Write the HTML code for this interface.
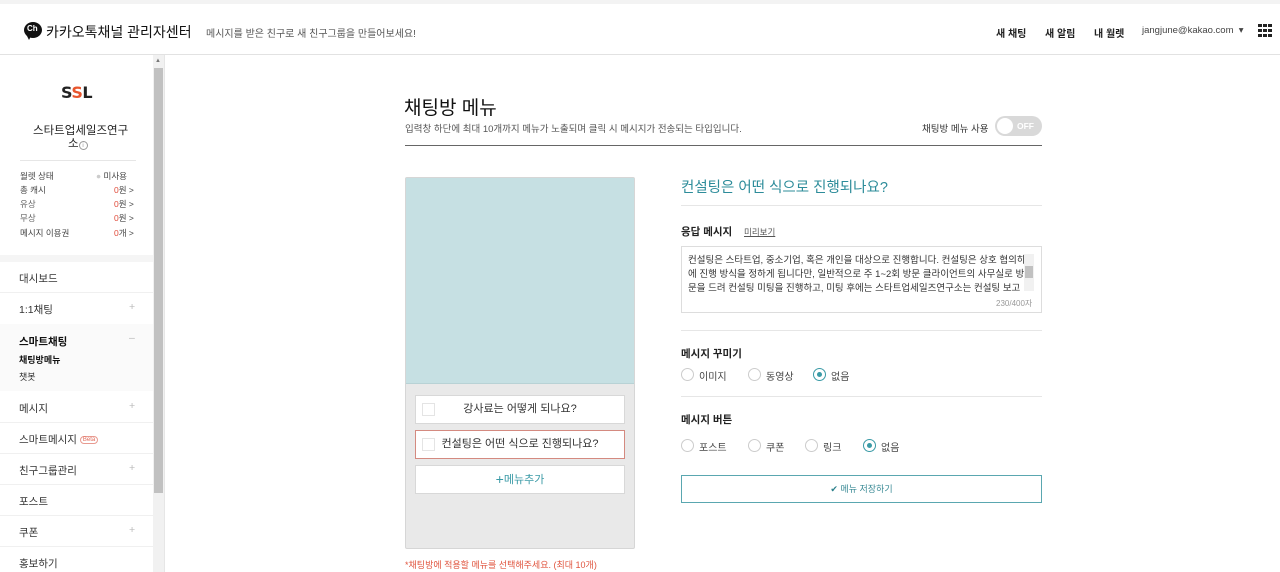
<!DOCTYPE html>
<html><head><meta charset="utf-8"><style>
*{box-sizing:border-box;margin:0;padding:0}
body{width:1280px;height:572px;overflow:hidden;background:#fff;font-family:"Liberation Sans","Noto Sans CJK KR",sans-serif;color:#222;position:relative}
.a{position:absolute}
.t{position:absolute;white-space:nowrap}
.radio{position:absolute;width:13px;height:13px;border:1px solid #ccc;border-radius:50%;background:#fff}
.radio.on{border-color:#3a9aa6}
.radio.on:after{content:"";position:absolute;left:3px;top:3px;width:5px;height:5px;border-radius:50%;background:#3a9aa6}
.lbl{font-size:10px;color:#444}
.mb{position:absolute;left:415px;width:210px;height:29px;background:#fff;border:1px solid #d8d8d8;font-size:11px;text-align:center;line-height:27px;color:#333}
.mb .cb{position:absolute;left:6px;top:7px;width:13px;height:13px;border:1px solid #e4e4e4}
</style></head><body>
<div class="a" style="left:0;top:0;width:1280px;height:4px;background:#f3f3f3"></div>
<div class="a" style="left:0;top:54px;width:1280px;height:1px;background:#e2e2e2"></div>
<!-- header -->
<div class="a" style="left:24px;top:22px;width:18px;height:16px;border-radius:50%;background:#111"></div>
<div class="a" style="left:26px;top:34px;width:0;height:0;border-left:3px solid transparent;border-right:3px solid transparent;border-top:6px solid #111"></div>
<div class="t" style="left:27px;top:24px;font-size:8px;color:#fff;font-weight:bold">Ch</div>
<div class="t" style="left:46px;top:22px;font-size:14px;color:#111">카카오톡채널 관리자센터</div>
<div class="t" style="left:206px;top:25px;font-size:10px;color:#555">메시지를 받은 친구로 새 친구그룹을 만들어보세요!</div>
<div class="t" style="left:996px;top:25px;font-size:10px;font-weight:bold">새 채팅</div>
<div class="t" style="left:1045px;top:25px;font-size:10px;font-weight:bold">새 알림</div>
<div class="t" style="left:1094px;top:25px;font-size:10px;font-weight:bold">내 월렛</div>
<div class="t" style="left:1142px;top:25px;font-size:9.5px;color:#444">jangjune@kakao.com &nbsp;▾</div>
<svg class="a" style="left:1258px;top:24px" width="15" height="14"><g fill="#222"><rect x="0" y="0" width="4" height="3"/><rect x="5" y="0" width="4" height="3"/><rect x="10" y="0" width="4" height="3"/><rect x="0" y="5" width="4" height="3"/><rect x="5" y="5" width="4" height="3"/><rect x="10" y="5" width="4" height="3"/><rect x="0" y="10" width="4" height="3"/><rect x="5" y="10" width="4" height="3"/><rect x="10" y="10" width="4" height="3"/></g></svg>
<!-- sidebar -->
<div class="a" style="left:153px;top:55px;width:11px;height:517px;background:#f1f1f1"></div>
<div class="a" style="left:154px;top:68px;width:9px;height:425px;background:#c1c1c1"></div>
<div class="t" style="left:155px;top:58px;font-size:6px;color:#777">▲</div>
<div class="a" style="left:164px;top:55px;width:1px;height:517px;background:#e6e6e6"></div>
<div class="t" style="left:61px;top:83px;font-family:'DejaVu Sans',sans-serif;font-size:16px;font-weight:bold;color:#222;letter-spacing:-0.5px">S<span style="color:#e8552d">S</span>L</div>
<div class="t" style="left:33px;top:122px;font-size:11.5px;color:#222">스타트업세일즈연구</div>
<div class="t" style="left:68px;top:135px;font-size:11.5px;color:#222">소<span style="display:inline-block;width:9px;height:9px;border:1px solid #999;border-radius:50%;font-size:6px;line-height:8px;text-align:center;color:#999">i</span></div>
<div class="a" style="left:20px;top:160px;width:116px;height:1px;background:#e6e6e6"></div>
<div style="font-size:8.5px;color:#444">
<div class="t" style="left:20px;top:170px">월렛 상태</div><div class="t" style="left:96px;top:170px"><span style="color:#ccc">●</span> 미사용</div>
<div class="t" style="left:20px;top:184px">총 캐시</div><div class="t" style="left:114px;top:184px"><span style="color:#e04b3a">0</span>원 &gt;</div>
<div class="t" style="left:20px;top:198px;color:#666">유상</div><div class="t" style="left:114px;top:198px"><span style="color:#e04b3a">0</span>원 &gt;</div>
<div class="t" style="left:20px;top:212px;color:#666">무상</div><div class="t" style="left:114px;top:212px"><span style="color:#e04b3a">0</span>원 &gt;</div>
<div class="t" style="left:20px;top:227px">메시지 이용권</div><div class="t" style="left:114px;top:227px"><span style="color:#e04b3a">0</span>개 &gt;</div>
</div>
<div class="a" style="left:0;top:255px;width:153px;height:7px;background:#f5f5f5"></div>
<div class="a" style="left:0;top:324px;width:153px;height:67px;background:#fafafa"></div>
<div style="font-size:10.5px;color:#333">
<div class="t" style="left:19px;top:271px">대시보드</div>
<div class="a" style="left:0;top:292px;width:153px;height:1px;background:#f0f0f0"></div>
<div class="t" style="left:19px;top:302px">1:1채팅</div><div class="t" style="left:129px;top:301px;color:#bbb">+</div>
<div class="t" style="left:19px;top:334px;font-weight:bold;color:#111">스마트채팅</div><div class="t" style="left:129px;top:332px;color:#bbb">–</div>
<div class="t" style="left:19px;top:353px;font-size:9px;font-weight:bold;color:#111">채팅방메뉴</div>
<div class="t" style="left:19px;top:370px;font-size:9px">챗봇</div>
<div class="t" style="left:19px;top:401px">메시지</div><div class="t" style="left:129px;top:400px;color:#bbb">+</div>
<div class="a" style="left:0;top:422px;width:153px;height:1px;background:#f0f0f0"></div>
<div class="t" style="left:19px;top:432px">스마트메시지 <span style="font-size:6px;color:#e06a5a;border:1px solid #e89a90;border-radius:6px;padding:0 2px;vertical-align:2px">Beta</span></div>
<div class="a" style="left:0;top:453px;width:153px;height:1px;background:#f0f0f0"></div>
<div class="t" style="left:19px;top:463px">친구그룹관리</div><div class="t" style="left:129px;top:462px;color:#bbb">+</div>
<div class="a" style="left:0;top:484px;width:153px;height:1px;background:#f0f0f0"></div>
<div class="t" style="left:19px;top:494px">포스트</div>
<div class="a" style="left:0;top:515px;width:153px;height:1px;background:#f0f0f0"></div>
<div class="t" style="left:19px;top:525px">쿠폰</div><div class="t" style="left:129px;top:524px;color:#bbb">+</div>
<div class="a" style="left:0;top:546px;width:153px;height:1px;background:#f0f0f0"></div>
<div class="t" style="left:19px;top:556px">홍보하기</div>
</div>
<!-- main -->
<div class="t" style="left:404px;top:93px;font-size:19px;color:#111">채팅방 메뉴</div>
<div class="t" style="left:405px;top:121px;font-size:9.5px;color:#555">입력창 하단에 최대 10개까지 메뉴가 노출되며 클릭 시 메시지가 전송되는 타입입니다.</div>
<div class="t" style="left:922px;top:121px;font-size:9.5px;color:#333">채팅방 메뉴 사용</div>
<div class="a" style="left:995px;top:116px;width:47px;height:20px;border-radius:10px;background:#d9d9d9"></div>
<div class="a" style="left:997px;top:118px;width:16px;height:16px;border-radius:50%;background:#fff"></div>
<div class="t" style="left:1017px;top:121px;font-size:8.5px;color:#fff;font-weight:bold">OFF</div>
<div class="a" style="left:405px;top:145px;width:637px;height:1px;background:#666"></div>
<!-- preview -->
<div class="a" style="left:405px;top:177px;width:230px;height:372px;background:#e9e9e9;border:1px solid #d6d6d6;border-radius:2px"></div>
<div class="a" style="left:406px;top:178px;width:228px;height:206px;background:#c6e0e3;border-bottom:1px solid #b8d2d5"></div>
<div class="mb" style="top:395px"><span class="cb"></span>강사료는 어떻게 되나요?</div>
<div class="mb" style="top:430px;border-color:#d48a80"><span class="cb"></span>컨설팅은 어떤 식으로 진행되나요?</div>
<div class="mb" style="top:465px;color:#3a9aa6"><span style="font-size:14px;vertical-align:-1px">+</span>메뉴추가</div>
<div class="t" style="left:405px;top:558px;font-size:9px;color:#e0553f">*채팅방에 적용할 메뉴를 선택해주세요. (최대 10개)</div>
<!-- right -->
<div class="t" style="left:681px;top:176px;font-size:14.5px;color:#2d8c9a">컨설팅은 어떤 식으로 진행되나요?</div>
<div class="a" style="left:681px;top:205px;width:361px;height:1px;background:#e6e6e6"></div>
<div class="t" style="left:681px;top:224px;font-size:10.5px;font-weight:bold;color:#222">응답 메시지</div>
<div class="t" style="left:744px;top:226px;font-size:8.5px;color:#555;text-decoration:underline">미리보기</div>
<div class="a" style="left:681px;top:246px;width:361px;height:67px;border:1px solid #ddd"></div>
<div class="t" style="left:688px;top:254px;font-size:9.5px;color:#333;line-height:14px">컨설팅은 스타트업, 중소기업, 혹은 개인을 대상으로 진행합니다. 컨설팅은 상호 협의하<br>에 진행 방식을 정하게 됩니다만, 일반적으로 주 1~2회 방문 클라이언트의 사무실로 방<br>문을 드려 컨설팅 미팅을 진행하고, 미팅 후에는 스타트업세일즈연구소는 컨설팅 보고</div>
<div class="a" style="left:1024px;top:254px;width:10px;height:37px;background:#f1f1f1"></div>
<div class="a" style="left:1025px;top:266px;width:8px;height:12px;background:#c1c1c1"></div>
<div class="t" style="left:996px;top:298px;font-size:8px;color:#999">230/400자</div>
<div class="a" style="left:681px;top:330px;width:361px;height:1px;background:#e6e6e6"></div>
<div class="t" style="left:681px;top:346px;font-size:10.5px;font-weight:bold">메시지 꾸미기</div>
<div class="radio" style="left:681px;top:368px"></div><div class="t lbl" style="left:699px;top:368px">이미지</div>
<div class="radio" style="left:748px;top:368px"></div><div class="t lbl" style="left:766px;top:368px">동영상</div>
<div class="radio on" style="left:813px;top:368px"></div><div class="t lbl" style="left:831px;top:368px">없음</div>
<div class="a" style="left:681px;top:396px;width:361px;height:1px;background:#e6e6e6"></div>
<div class="t" style="left:681px;top:412px;font-size:10.5px;font-weight:bold">메시지 버튼</div>
<div class="radio" style="left:681px;top:439px"></div><div class="t lbl" style="left:699px;top:439px">포스트</div>
<div class="radio" style="left:748px;top:439px"></div><div class="t lbl" style="left:766px;top:439px">쿠폰</div>
<div class="radio" style="left:805px;top:439px"></div><div class="t lbl" style="left:823px;top:439px">링크</div>
<div class="radio on" style="left:863px;top:439px"></div><div class="t lbl" style="left:881px;top:439px">없음</div>
<div class="a" style="left:681px;top:475px;width:361px;height:28px;border:1px solid #5aa7b0;text-align:center;line-height:26px;font-size:9px;color:#3a8a95"><span style="color:#2a7f8a">✔</span> 메뉴 저장하기</div>
</body></html>
